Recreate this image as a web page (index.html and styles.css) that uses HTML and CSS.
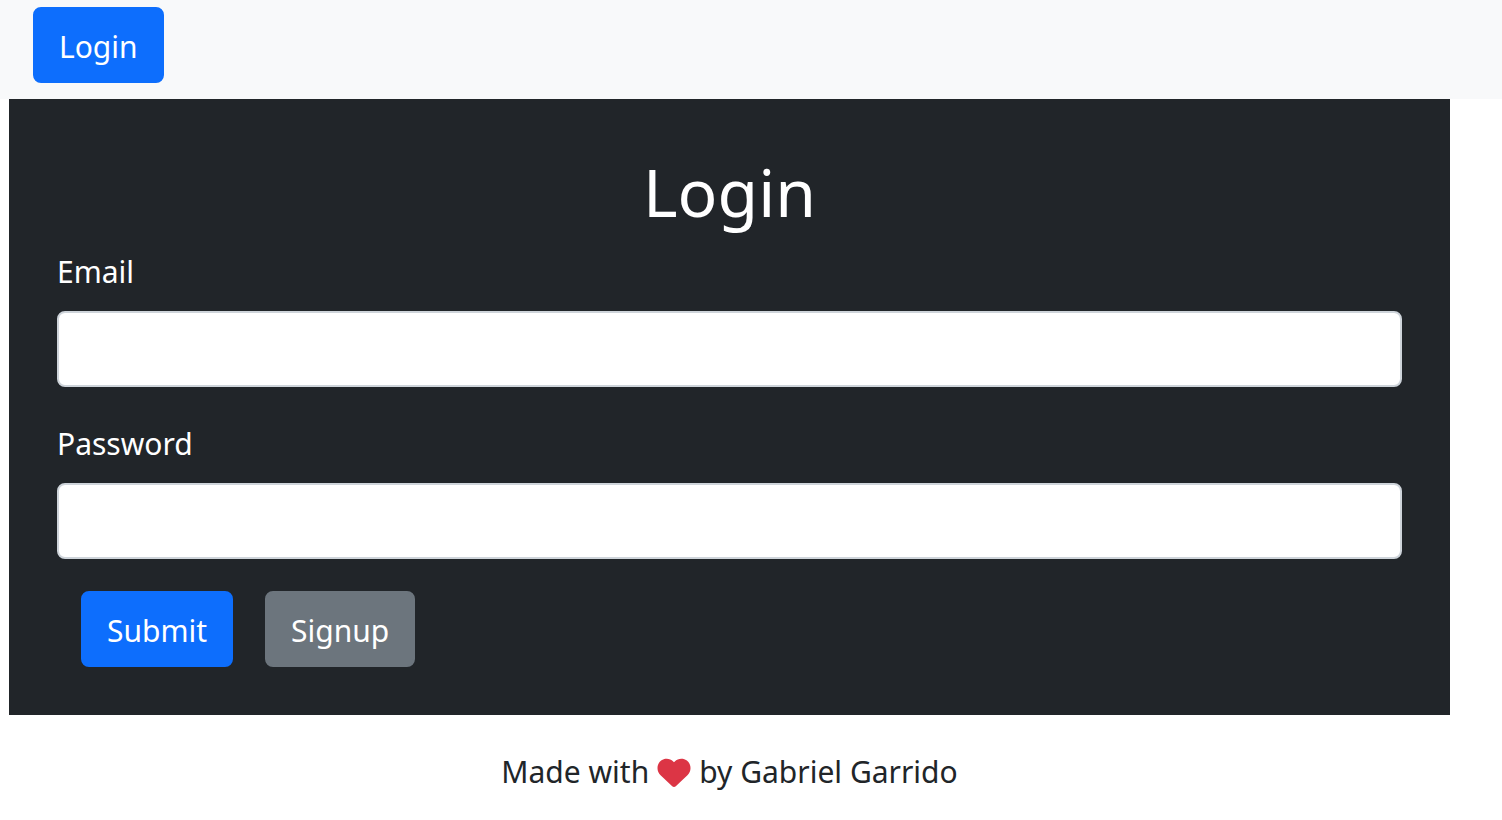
FILE: index.html
```html
<!DOCTYPE html>
<html lang="en">
<head>
<meta charset="utf-8">
<meta name="viewport" content="width=device-width, initial-scale=1">
<title>Login</title>
<link rel="stylesheet" href="styles.css">
</head>
<body>
<nav class="navbar">
  <button type="button" class="btn btn-primary">Login</button>
</nav>
<main class="page">
  <form class="panel">
    <h1 class="title">Login</h1>
    <div class="field">
      <label class="label" for="email">Email</label>
      <input class="input" id="email" type="email">
    </div>
    <div class="field">
      <label class="label" for="password">Password</label>
      <input class="input" id="password" type="password">
    </div>
    <div class="actions">
      <button type="submit" class="btn btn-primary">Submit</button>
      <button type="button" class="btn btn-secondary">Signup</button>
    </div>
  </form>
  <footer class="footer">
    <span>Made with</span>
    <svg class="heart" viewBox="0 0 512 512" role="img" aria-label="love"><path fill="currentColor" d="M47.6 300.4L228.3 469.1c7.5 7 17.4 10.9 27.7 10.9s20.2-3.9 27.7-10.9L464.4 300.4c30.4-28.3 47.6-68 47.6-109.5v-5.8c0-69.9-50.5-129.5-119.4-141C347 36.5 300.6 51.4 268 84L256 96 244 84c-32.6-32.6-79-47.5-124.6-39.9C50.5 55.6 0 115.2 0 185.1v5.8c0 41.5 17.2 81.2 47.6 109.5z"/></svg>
    <span>by Gabriel Garrido</span>
  </footer>
</main>
</body>
</html>
```
FILE: styles.css
```css
* { box-sizing: border-box; }

body {
  margin: 0;
  background: #fff;
  color: #212529;
  font-family: "Segoe UI", "Noto Sans", "Open Sans", sans-serif;
  font-size: 30px;
  line-height: 48px;
}

.navbar {
  padding: 7px 33px 16px;
  background: #f8f9fa;
}

.navbar .btn { display: block; }

.page { margin: 0 52px 0 9px; }

.panel {
  padding: 48px;
  background: #212529;
  color: #fff;
}

.title {
  margin: 0 0 12px;
  font-size: 66px;
  font-weight: 400;
  line-height: 88px;
  text-align: center;
}

.field { margin-bottom: 32px; }

.label {
  display: block;
  margin-bottom: 14px;
  line-height: 50px;
}

.input {
  display: block;
  width: 100%;
  height: 76px;
  padding: 12px 24px;
  border: 2px solid #ced4da;
  border-radius: 8px;
  background: #fff;
  color: #212529;
  font: inherit;
}

.actions {
  display: flex;
  gap: 32px;
  padding: 0 24px;
}

.btn {
  padding: 14px 24px 10px;
  border: 2px solid transparent;
  border-radius: 8px;
  color: #fff;
  font: inherit;
  cursor: pointer;
}

.btn-primary {
  border-color: #0d6efd;
  background: #0d6efd;
}

.btn-secondary {
  border-color: #6c757d;
  background: #6c757d;
}

.footer {
  display: flex;
  justify-content: center;
  align-items: center;
  gap: 8px;
  padding-top: 33px;
}

.heart {
  width: 34px;
  height: 33px;
  color: #dc3545;
}
```
